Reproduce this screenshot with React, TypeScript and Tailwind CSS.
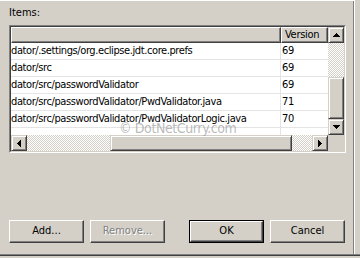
const FONT = "font-['DejaVu_Sans_Condensed','Liberation_Sans',sans-serif]";

const raised =
  'border border-t-[#d4d0c8] border-l-[#d4d0c8] border-r-[#404040] border-b-[#404040] shadow-[inset_1px_1px_#ffffff,inset_-1px_-1px_#808080]';
const btnRaised =
  'border border-t-white border-l-white border-r-[#404040] border-b-[#404040] shadow-[inset_-1px_-1px_#808080]';
const checker = 'bg-[image:repeating-conic-gradient(#ffffff_0%_25%,#d4d0c8_0%_50%)] bg-[length:2px_2px]';

const ROWS: [string, string][] = [
  ['dator/.settings/org.eclipse.jdt.core.prefs', '69'],
  ['dator/src', '69'],
  ['dator/src/passwordValidator', '69'],
  ['dator/src/passwordValidator/PwdValidator.java', '71'],
  ['dator/src/passwordValidator/PwdValidatorLogic.java', '70'],
];

function Arrow({ dir }: { dir: 'up' | 'down' | 'left' | 'right' }) {
  const steps = [0, 1, 2, 3];
  if (dir === 'up' || dir === 'down') {
    return (
      <svg width="7" height="4" shapeRendering="crispEdges">
        {steps.map((i) => {
          const y = dir === 'up' ? i : 3 - i;
          return <rect key={i} x={3 - i} y={y} width={2 * i + 1} height={1} fill="#000" />;
        })}
      </svg>
    );
  }
  return (
    <svg width="4" height="7" shapeRendering="crispEdges">
      {steps.map((i) => {
        const x = dir === 'left' ? i : 3 - i;
        return <rect key={i} x={x} y={3 - i} width={1} height={2 * i + 1} fill="#000" />;
      })}
    </svg>
  );
}

function ScrollBtn({ dir }: { dir: 'up' | 'down' | 'left' | 'right' }) {
  return (
    <div className={`w-[16px] h-[16px] shrink-0 flex items-center justify-center bg-[#d4d0c8] ${raised}`}>
      <Arrow dir={dir} />
    </div>
  );
}

function Button({ label, disabled, isDefault }: { label: string; disabled?: boolean; isDefault?: boolean }) {
  const face = (
    <div
      className={`h-full w-full flex items-center justify-center bg-[#d4d0c8] ${btnRaised} ${
        disabled ? 'text-[#808080] [text-shadow:1px_1px_#ffffff]' : 'text-black'
      }`}
    >
      {label}
    </div>
  );
  if (isDefault) {
    return <div className="w-[75px] h-[23px] border border-black">{face}</div>;
  }
  return <div className="w-[75px] h-[23px]">{face}</div>;
}

export default function App() {
  return (
    <div className={`relative w-[360px] h-[258px] overflow-hidden bg-[#d4d0c8] text-[11px] text-black ${FONT}`}>
      <div className="w-[355px] h-[254px] border-t border-t-white border-r border-r-white shadow-[inset_-1px_0_#808080]">
        <div className="pl-[9px]">
          <div className="h-[24px] pt-[5px] leading-[13px]">Items:</div>

          {/* list view */}
          <div className="w-[337px] h-[128px] border border-t-[#808080] border-l-[#808080] border-r-white border-b-white">
            <div className="w-full h-full border border-t-[#404040] border-l-[#404040] border-r-[#d4d0c8] border-b-[#d4d0c8] bg-white flex flex-col">
              <div className="flex h-[109px]">
                <div className="w-[317px] flex flex-col overflow-hidden">
                  <div className="flex h-[16px] shrink-0">
                    <div className={`w-[270px] bg-[#d4d0c8] ${btnRaised}`} />
                    <div className={`flex-1 bg-[#d4d0c8] pl-[3px] leading-[14px] tracking-[-0.3px] ${btnRaised}`}>Version</div>
                  </div>
                  {ROWS.map(([name, ver]) => (
                    <div key={name} className="flex h-[17px] shrink-0 border-b border-b-[#e4e4e4] leading-[16px] tracking-[-0.4px]">
                      <div className="w-[270px] border-r border-r-[#e4e4e4] whitespace-nowrap overflow-hidden">{name}</div>
                      <div className="flex-1 pl-[1px]">{ver}</div>
                    </div>
                  ))}
                  <div className="flex flex-1">
                    <div className="w-[270px] border-r border-r-[#e4e4e4]" />
                  </div>
                </div>
                {/* vertical scrollbar */}
                <div className="w-[16px] flex flex-col">
                  <ScrollBtn dir="up" />
                  <div className={`h-[34px] ${checker}`} />
                  <div className={`flex-1 bg-[#d4d0c8] ${raised}`} />
                  <ScrollBtn dir="down" />
                </div>
              </div>
              {/* horizontal scrollbar */}
              <div className="flex h-[16px]">
                <ScrollBtn dir="left" />
                <div className={`w-[83px] ${checker}`} />
                <div className={`w-[182px] bg-[#d4d0c8] ${raised}`} />
                <div className={`w-[20px] ${checker}`} />
                <ScrollBtn dir="right" />
                <div className="flex-1 bg-[#d4d0c8]" />
              </div>
            </div>
          </div>

          <div className="flex mt-[67px]">
            <Button label="Add..." />
            <div className="ml-[6px]">
              <Button label="Remove..." disabled />
            </div>
            <div className="ml-[24px]">
              <Button label="OK" isDefault />
            </div>
            <div className="ml-[6px]">
              <Button label="Cancel" />
            </div>
          </div>
        </div>
      </div>
      <div className="h-px w-full bg-[#808080]" />
      <div className="h-px w-full bg-[#404040]" />

      <div className="absolute left-[119px] top-[120px] text-[14px] leading-[17px] tracking-[-0.4px] text-[#9c9c9c]/70 whitespace-nowrap pointer-events-none">
        © DotNetCurry.com
      </div>
    </div>
  );
}
